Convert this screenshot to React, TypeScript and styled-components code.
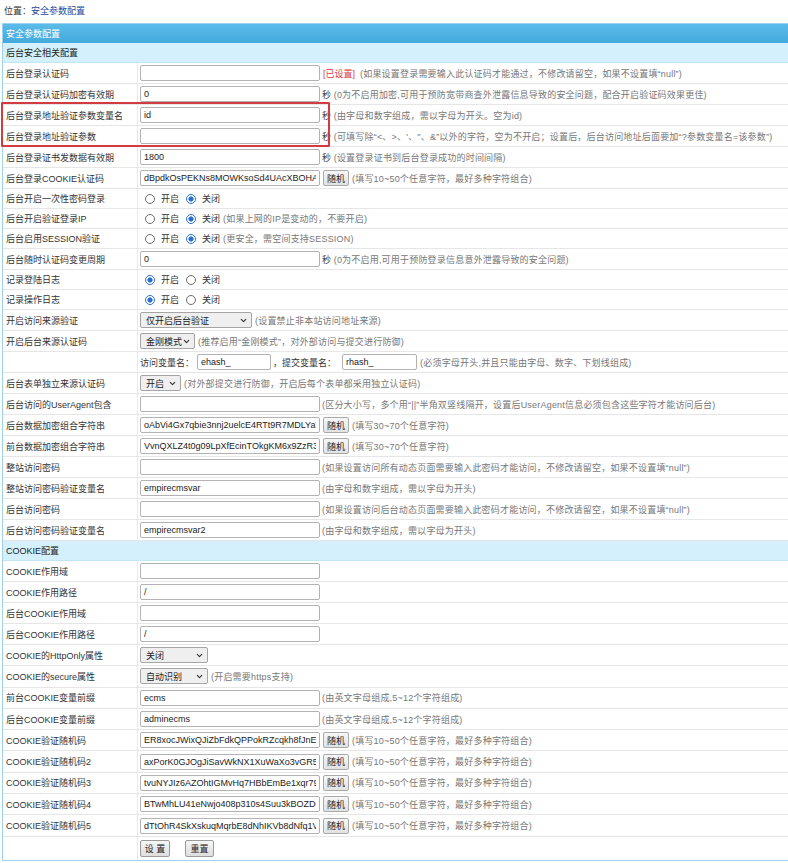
import React from "react";
import styled, { createGlobalStyle } from "styled-components";
import { ChevronDown } from "lucide-react";

const GlobalStyle = createGlobalStyle`
  html, body {
    margin: 0;
    padding: 0;
    overflow: hidden;
    background: #fff;
  }
  body {
    font: 9px "Liberation Sans", "Noto Sans CJK SC", sans-serif;
    color: #333;
  }
`;

const Page = styled.div`
  position: relative;
  width: 788px;
  box-sizing: border-box;
  padding: 4px 0 0 2px;
  overflow: hidden;
`;

const Location = styled.div`
  line-height: 14px;
  padding-left: 2px;
  margin-bottom: 5px;
`;

const Crumb = styled.span`
  color: #1d4b9c;
`;

const Table = styled.div`
  border: 1px solid #9fd2ec;
  border-right: none;
`;

const HeaderBar = styled.div`
  height: 19px;
  display: flex;
  align-items: center;
  padding-left: 3px;
  color: #fff;
  background: linear-gradient(#5bbce9, #43a9dc);
`;

const Section = styled.div`
  height: 20px;
  box-sizing: border-box;
  display: flex;
  align-items: center;
  padding-left: 3px;
  background: #d3f0fc;
  border-bottom: 1px solid #c2e5f4;
  color: #222;
`;

const Row = styled.div<{ $h?: number }>`
  display: grid;
  grid-template-columns: 135px 1fr;
  height: ${(p) => p.$h ?? 21}px;
  box-sizing: border-box;
  border-bottom: 1px solid #e6e6e6;
  &:last-child {
    border-bottom: none;
  }
`;

const Label = styled.div`
  display: flex;
  align-items: center;
  padding-left: 3px;
  border-right: 1px solid #e4ebef;
  white-space: nowrap;
  color: #333;
`;

const Value = styled.div`
  display: flex;
  align-items: center;
  padding-left: 2px;
  white-space: nowrap;
  overflow: hidden;
`;

const TextInput = styled.input<{ $w?: number; $ml?: number }>`
  width: ${(p) => p.$w ?? 180}px;
  height: 16px;
  flex: none;
  box-sizing: border-box;
  margin: 0 0 0 ${(p) => p.$ml ?? 0}px;
  padding: 0 3px;
  border: 1px solid #b3b3b3;
  border-radius: 2px;
  font: inherit;
  color: #222;
  background: #fff;
  outline: none;
`;

const Note = styled.span<{ $gap?: number }>`
  margin-left: ${(p) => p.$gap ?? 2}px;
  color: #777;
  letter-spacing: 0.2px;
`;

const Unit = styled.span`
  color: #444;
  letter-spacing: 0;
`;

const Flag = styled.span`
  margin-left: 3px;
  color: #e0393b;
`;

const Text = styled.span<{ $gap?: number }>`
  margin-left: ${(p) => p.$gap ?? 0}px;
  color: #333;
`;

const RandomBtn = styled.button`
  width: 26px;
  height: 16px;
  flex: none;
  margin: 0 0 0 3px;
  padding: 0;
  box-sizing: border-box;
  border: 1px solid #a9a9a9;
  border-radius: 2px;
  background: linear-gradient(#f7f7f7, #e2e2e2);
  font: inherit;
  color: #222;
`;

const SelectBox = styled.div<{ $w: number }>`
  width: ${(p) => p.$w}px;
  height: 16px;
  flex: none;
  box-sizing: border-box;
  display: flex;
  align-items: center;
  justify-content: space-between;
  padding: 0 3px 0 5px;
  border: 1px solid #a5a5a5;
  border-radius: 2px;
  background: #efefef;
  color: #222;
`;

const RadioSet = styled.div`
  display: flex;
  align-items: center;
  padding-left: 5px;
`;

const RadioItem = styled.label`
  display: flex;
  align-items: center;
  gap: 6px;
  margin-right: 7px;
  color: #333;
`;

const RadioMark = styled.span<{ $on?: boolean }>`
  width: 10px;
  height: 10px;
  box-sizing: border-box;
  border-radius: 50%;
  border: 1px solid ${(p) => (p.$on ? "#2b6fd4" : "#6c6c6c")};
  background: ${(p) =>
    p.$on
      ? "radial-gradient(circle, #2b6fd4 0 2.3px, #fff 2.9px)"
      : "#fff"};
`;

const ActionBar = styled.div`
  display: flex;
  align-items: center;
  gap: 15px;
`;

const ActionBtn = styled.button<{ $w: number }>`
  width: ${(p) => p.$w}px;
  height: 17px;
  margin: 0;
  padding: 0;
  box-sizing: border-box;
  border: 1px solid #9a9a9a;
  border-radius: 2px;
  background: linear-gradient(#f6f6f6, #dedede);
  font: inherit;
  color: #222;
`;

const Highlight = styled.div`
  position: absolute;
  left: 1px;
  top: 102px;
  width: 329px;
  height: 45px;
  box-sizing: border-box;
  border: 2px solid #d23b3f;
  border-radius: 1px;
  pointer-events: none;
`;

type Field = {
  label: string;
  value?: string;
  unit?: boolean;
  note?: string;
  random?: boolean;
  flag?: string;
  h?: number;
};

const FieldRow = ({ label, value = "", unit, note, random, flag, h }: Field) => (
  <Row $h={h}>
    <Label>{label}</Label>
    <Value>
      <TextInput value={value} readOnly />
      {random && <RandomBtn>随机</RandomBtn>}
      {flag && <Flag>{flag}</Flag>}
      {unit ? (
        <Note $gap={2}>
          <Unit>秒</Unit> {note}
        </Note>
      ) : (
        note && <Note $gap={random ? 3 : flag ? 5 : 2}>{note}</Note>
      )}
    </Value>
  </Row>
);

const Select = ({ w, text }: { w: number; text: string }) => (
  <SelectBox $w={w}>
    <span>{text}</span>
    <ChevronDown size={9} strokeWidth={3} color="#333" />
  </SelectBox>
);

const RadioRow = ({
  label,
  on,
  note,
  h = 20,
}: {
  label: string;
  on: 0 | 1;
  note?: string;
  h?: number;
}) => (
  <Row $h={h}>
    <Label>{label}</Label>
    <Value>
      <RadioSet>
        <RadioItem>
          <RadioMark $on={on === 0} />
          开启
        </RadioItem>
        <RadioItem>
          <RadioMark $on={on === 1} />
          关闭
        </RadioItem>
      </RadioSet>
      {note && <Note $gap={-4}>{note}</Note>}
    </Value>
  </Row>
);

const SelectRow = ({
  label,
  w,
  text,
  note,
  h,
}: {
  label: string;
  w: number;
  text: string;
  note?: string;
  h?: number;
}) => (
  <Row $h={h}>
    <Label>{label}</Label>
    <Value>
      <Select w={w} text={text} />
      {note && <Note $gap={3}>{note}</Note>}
    </Value>
  </Row>
);

const random50 = "(填写10~50个任意字符，最好多种字符组合)";
const random70 = "(填写30~70个任意字符)";
const prefixNote = "(由英文字母组成,5~12个字符组成)";
const paramNote =
  "(可填写除“<、>、'、\"、&”以外的字符，空为不开启；设置后，后台访问地址后面要加“?参数变量名=该参数”)";

const cookieCodes = [
  ["COOKIE验证随机码", "ER8xocJWixQJiZbFdkQPPokRZcqkh8fJnEDk2"],
  ["COOKIE验证随机码2", "axPorK0GJOgJiSavWkNX1XuWaXo3vGR5oQm"],
  ["COOKIE验证随机码3", "tvuNYJIz6AZOhtIGMvHq7HBbEmBe1xqr79Lp"],
  ["COOKIE验证随机码4", "BTwMhLU41eNwjo408p310s4Suu3kBOZDq8"],
  ["COOKIE验证随机码5", "dTtOhR4SkXskuqMqrbE8dNhIKVb8dNfq1Vx"],
];

export default function App() {
  return (
    <Page>
      <GlobalStyle />
      <Location>
        位置：<Crumb>安全参数配置</Crumb>
      </Location>
      <Table>
        <HeaderBar>安全参数配置</HeaderBar>
        <Section>后台安全相关配置</Section>
        <FieldRow
          label="后台登录认证码"
          flag="[已设置]"
          note="(如果设置登录需要输入此认证码才能通过，不修改请留空，如果不设置填“null”)"
        />
        <FieldRow
          label="后台登录认证码加密有效期"
          value="0"
          unit
          note="(0为不启用加密,可用于预防宽带商查外泄露信息导致的安全问题，配合开启验证码效果更佳)"
        />
        <FieldRow
          label="后台登录地址验证参数变量名"
          value="id"
          unit
          note="(由字母和数字组成，需以字母为开头。空为id)"
        />
        <FieldRow label="后台登录地址验证参数" unit note={paramNote} />
        <FieldRow
          label="后台登录证书发数据有效期"
          value="1800"
          unit
          note="(设置登录证书到后台登录成功的时间间隔)"
        />
        <FieldRow
          label="后台登录COOKIE认证码"
          value="dBpdkOsPEKNs8MOWKsoSd4UAcXBOHAQ"
          random
          note={random50}
        />
        <RadioRow label="后台开启一次性密码登录" on={1} />
        <RadioRow
          label="后台开启验证登录IP"
          on={1}
          note="(如果上网的IP是变动的，不要开启)"
        />
        <RadioRow
          label="后台启用SESSION验证"
          on={1}
          note="(更安全，需空间支持SESSION)"
        />
        <FieldRow
          label="后台随时认证码变更周期"
          value="0"
          unit
          note="(0为不启用,可用于预防登录信息意外泄露导致的安全问题)"
        />
        <RadioRow label="记录登陆日志" on={0} />
        <RadioRow label="记录操作日志" on={0} />
        <SelectRow
          label="开启访问来源验证"
          w={112}
          text="仅开启后台验证"
          note="(设置禁止非本站访问地址来源)"
        />
        <SelectRow
          label="开启后台来源认证码"
          w={55}
          text="金刚模式"
          note="(推荐启用“金刚模式”，对外部访问与提交进行防御)"
        />
        <Row>
          <Label />
          <Value>
            <Text>访问变量名：</Text>
            <TextInput $w={74} $ml={3} value="ehash_" readOnly />
            <Text $gap={2}>，提交变量名：</Text>
            <TextInput $w={75} $ml={6} value="rhash_" readOnly />
            <Note $gap={3}>(必须字母开头,并且只能由字母、数字、下划线组成)</Note>
          </Value>
        </Row>
        <SelectRow
          label="后台表单独立来源认证码"
          w={41}
          text="开启"
          note="(对外部提交进行防御，开启后每个表单都采用独立认证码)"
        />
        <FieldRow
          label="后台访问的UserAgent包含"
          note="(区分大小写，多个用“||”半角双竖线隔开，设置后UserAgent信息必须包含这些字符才能访问后台)"
        />
        <FieldRow
          label="后台数据加密组合字符串"
          value="oAbVi4Gx7qbie3nnj2uelcE4RTt9R7MDLYaVk3Qp8sWnT2h"
          random
          note={random70}
        />
        <FieldRow
          label="前台数据加密组合字符串"
          value="VvnQXLZ4t0g09LpXfEcinTOkgKM6x9ZzR3mPq7Lw2"
          random
          note={random70}
        />
        <FieldRow
          label="整站访问密码"
          note="(如果设置访问所有动态页面需要输入此密码才能访问，不修改请留空，如果不设置填“null”)"
        />
        <FieldRow
          label="整站访问密码验证变量名"
          value="empirecmsvar"
          note="(由字母和数字组成，需以字母为开头)"
        />
        <FieldRow
          label="后台访问密码"
          note="(如果设置访问后台动态页面需要输入此密码才能访问，不修改请留空，如果不设置填“null”)"
        />
        <FieldRow
          label="后台访问密码验证变量名"
          value="empirecmsvar2"
          note="(由字母和数字组成，需以字母为开头)"
        />
        <Section>COOKIE配置</Section>
        <FieldRow label="COOKIE作用域" />
        <FieldRow label="COOKIE作用路径" value="/" />
        <FieldRow label="后台COOKIE作用域" />
        <FieldRow label="后台COOKIE作用路径" value="/" />
        <SelectRow label="COOKIE的HttpOnly属性" w={68} text="关闭" h={21.3} />
        <SelectRow
          label="COOKIE的secure属性"
          w={68}
          text="自动识别"
          note="(开启需要https支持)"
          h={21.3}
        />
        <FieldRow label="前台COOKIE变量前缀" value="ecms" note={prefixNote} h={21.3} />
        <FieldRow label="后台COOKIE变量前缀" value="adminecms" note={prefixNote} h={21.3} />
        {cookieCodes.map(([label, value]) => (
          <FieldRow key={label} label={label} value={value} random note={random50} h={21.3} />
        ))}
        <Row $h={23}>
          <Label />
          <Value>
            <ActionBar>
              <ActionBtn $w={30}>设 置</ActionBtn>
              <ActionBtn $w={29}>重置</ActionBtn>
            </ActionBar>
          </Value>
        </Row>
      </Table>
      <Highlight />
    </Page>
  );
}
